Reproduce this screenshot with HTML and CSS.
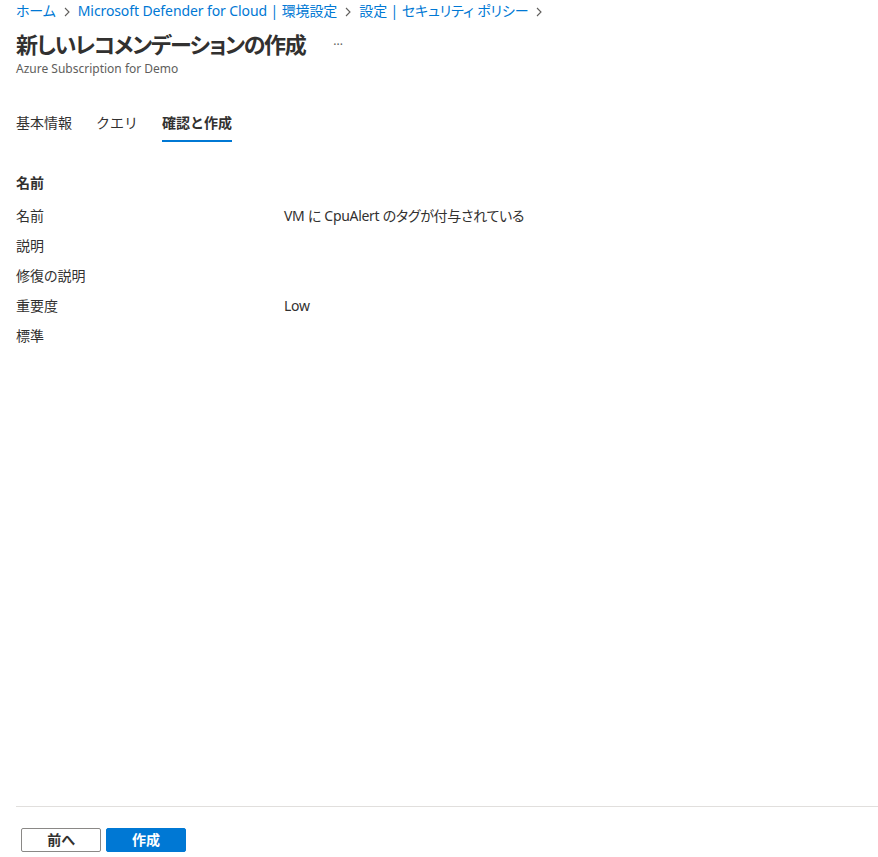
FILE: index.html
```html
<!DOCTYPE html>
<html lang="ja">
<head>
<meta charset="utf-8">
<link rel="stylesheet" href="styles.css">
</head>
<body>
<div class="page">
  <div class="main">
    <nav class="crumbs">
      <a class="crumb">ホーム</a>
      <span class="chev"><svg width="8" height="10" viewBox="0 0 8 10"><path d="M2 1 L6 5 L2 9" fill="none" stroke="#605e5c" stroke-width="1.1"/></svg></span>
      <a class="crumb">Microsoft Defender for Cloud | 環境設定</a>
      <span class="chev"><svg width="8" height="10" viewBox="0 0 8 10"><path d="M2 1 L6 5 L2 9" fill="none" stroke="#605e5c" stroke-width="1.1"/></svg></span>
      <a class="crumb">設定 | セキュリティ ポリシー</a>
      <span class="chev"><svg width="8" height="10" viewBox="0 0 8 10"><path d="M2 1 L6 5 L2 9" fill="none" stroke="#605e5c" stroke-width="1.1"/></svg></span>
    </nav>
    <div class="titlerow">
      <h1 class="title">新しいレコメンデーションの作成</h1>
      <span class="more">···</span>
    </div>
    <div class="subtitle">Azure Subscription for Demo</div>

    <div class="tabs">
      <div class="tab">基本情報</div>
      <div class="tab">クエリ</div>
      <div class="tab active">確認と作成</div>
    </div>

    <h2 class="section">名前</h2>
    <div class="rows">
      <div class="row"><div class="label">名前</div><div class="value">VM に CpuAlert のタグが付与されている</div></div>
      <div class="row"><div class="label">説明</div><div class="value"></div></div>
      <div class="row"><div class="label">修復の説明</div><div class="value"></div></div>
      <div class="row"><div class="label">重要度</div><div class="value">Low</div></div>
      <div class="row"><div class="label">標準</div><div class="value"></div></div>
    </div>
  </div>
  <footer class="footer">
    <button class="btn secondary">前へ</button>
    <button class="btn primary">作成</button>
  </footer>
</div>
</body>
</html>
```
FILE: styles.css
```css
* { box-sizing: border-box; }
html, body { margin: 0; padding: 0; background: #fff; }
body {
  font-family: "Noto Sans", "Noto Sans CJK JP", sans-serif;
  color: #323130;
  font-size: 14px;
  font-feature-settings: "palt";
}
.page {
  height: 857px;
  display: flex;
  flex-direction: column;
  padding-left: 16px;
}
.main { flex: 1; }
.crumbs {
  display: flex;
  align-items: center;
  height: 22px;
  font-size: 14px;
  line-height: 22px;
  letter-spacing: -0.1px;
}
.crumb { color: #0078d4; }
.chev { display: inline-flex; align-items: center; width: 22px; justify-content: center; height: 22px; padding-top: 2px; }
.titlerow {
  display: flex;
  align-items: center;
  margin-top: 6px;
  height: 32px;
}
.title {
  margin: 0;
  font-size: 22px;
  font-weight: 700;
  line-height: 32px;
  letter-spacing: -1.4px;
}
.more {
  margin-left: 28px;
  font-size: 12px;
  color: #605e5c;
  letter-spacing: 0;
}
.subtitle {
  font-size: 12px;
  color: #605e5c;
  line-height: 16px;
  margin-top: 1px;
}
.tabs {
  display: flex;
  gap: 24px;
  margin-top: 31px;
  font-feature-settings: normal;
}
.tab {
  height: 34px;
  line-height: 30px;
  font-size: 14px;
  border-bottom: 2px solid transparent;
}
.tab.active {
  font-weight: 700;
  border-bottom-color: #0078d4;
}
.section {
  margin: 31px 0 0;
  font-size: 14px;
  font-weight: 700;
  line-height: 20px;
}
.rows { margin-top: 13px; }
.row {
  display: flex;
  height: 30px;
  line-height: 20px;
}
.label { width: 268px; }
.value { flex: 1; letter-spacing: -0.3px; }
.footer {
  border-top: 1px solid #e1dfdd;
  height: 51px;
  display: flex;
  gap: 5px;
  padding: 21px 0 0 5px;
  align-items: flex-start;
}
.btn {
  width: 80px;
  height: 24px;
  font-family: inherit;
  font-size: 14px;
  font-weight: 700;
  border-radius: 2px;
  padding: 0;
  line-height: 20px;
  font-feature-settings: "palt";
}
.btn.secondary { background: #fff; border: 1px solid #8a8886; color: #323130; }
.btn.primary { background: #0078d4; border: 1px solid #0078d4; color: #fff; }
```
